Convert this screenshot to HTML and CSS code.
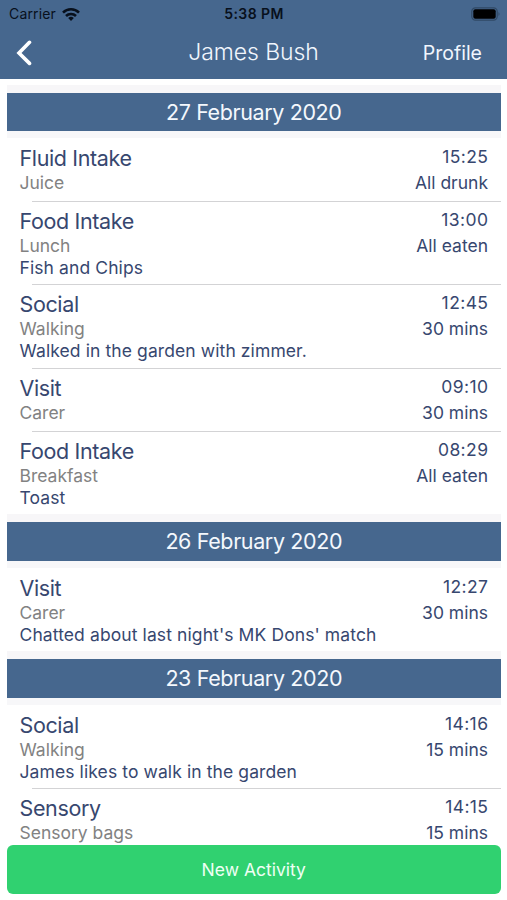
FILE: index.html
```html
<!DOCTYPE html>
<html lang="en">
<head>
<meta charset="utf-8">
<title>James Bush</title>
<link rel="stylesheet" href="styles.css">
</head>
<body>
<div class="app">
  <header class="header">
    <div class="status">
      <div class="carrier"><span>Carrier</span>
        <svg class="wifi" width="18" height="13" viewBox="0 0 18 13" fill="none" stroke="#08101c" stroke-width="2.6"><path d="M1 4.6A11.4 11.4 0 0 1 17 4.6"/><path d="M4 8A7.1 7.1 0 0 1 14 8"/><path d="M9 13L6.2 10.1A4 4 0 0 1 11.8 10.1Z" fill="#08101c" stroke="none"/></svg>
      </div>
      <span class="clock">5:38 PM</span>
      <svg class="battery" width="30" height="14" viewBox="0 0 30 14"><rect x=".8" y=".8" width="25.4" height="12.4" rx="3.6" fill="none" stroke="#304965" stroke-width="1.2"/><rect x="2.3" y="2.3" width="22.4" height="9.4" rx="2" fill="#000"/><path d="M27.5 5Q29.5 7 27.5 9Z" fill="#304965"/></svg>
    </div>
    <nav class="nav">
      <svg class="back" width="18" height="28" viewBox="0 0 18 28" fill="none" stroke="#fff" stroke-width="3.6" stroke-linecap="round" stroke-linejoin="miter"><path d="M15.5 3.3L5 14L15.5 24.4"/></svg>
      <h1 class="name">James Bush</h1>
      <span class="profile">Profile</span>
    </nav>
  </header>
  <main class="list">
    <section>
      <h2 class="date">27 February 2020</h2>
      <article class="row"><div><h3>Fluid Intake</h3><p class="kind">Juice</p></div><div class="side"><time>15:25</time><p>All drunk</p></div></article>
      <article class="row tall"><div><h3>Food Intake</h3><p class="kind">Lunch</p><p class="note">Fish and Chips</p></div><div class="side"><time>13:00</time><p>All eaten</p></div></article>
      <article class="row tall"><div><h3>Social</h3><p class="kind">Walking</p><p class="note">Walked in the garden with zimmer.</p></div><div class="side"><time>12:45</time><p>30 mins</p></div></article>
      <article class="row"><div><h3>Visit</h3><p class="kind">Carer</p></div><div class="side"><time>09:10</time><p>30 mins</p></div></article>
      <article class="row tall"><div><h3>Food Intake</h3><p class="kind">Breakfast</p><p class="note">Toast</p></div><div class="side"><time>08:29</time><p>All eaten</p></div></article>
    </section>
    <section>
      <h2 class="date">26 February 2020</h2>
      <article class="row tall"><div><h3>Visit</h3><p class="kind">Carer</p><p class="note">Chatted about last night's MK Dons' match</p></div><div class="side"><time>12:27</time><p>30 mins</p></div></article>
    </section>
    <section>
      <h2 class="date">23 February 2020</h2>
      <article class="row tall"><div><h3>Social</h3><p class="kind">Walking</p><p class="note">James likes to walk in the garden</p></div><div class="side"><time>14:16</time><p>15 mins</p></div></article>
      <article class="row"><div><h3>Sensory</h3><p class="kind">Sensory bags</p></div><div class="side"><time>14:15</time><p>15 mins</p></div></article>
    </section>
  </main>
  <footer class="footer"><button class="add">New Activity</button></footer>
</div>
</body>
</html>
```
FILE: styles.css
```css
* { box-sizing: border-box; margin: 0; padding: 0; }
body { background: #fff; font-family: Inter, "Liberation Sans", sans-serif; color: #37476f; }
h1, h2, h3 { font-weight: 400; }
svg { display: block; }
.app { height: 900px; display: flex; flex-direction: column; overflow: hidden; }
.header { height: 79px; flex: none; background: #46678e; }
.status { height: 28px; display: grid; grid-template-columns: 1fr auto 1fr; align-items: center; padding: 0 6px 2px 7px; color: #08101c; font-size: 14px; line-height: 28px; }
.carrier { display: flex; align-items: center; gap: 6px; padding-left: 2px; letter-spacing: .15px; }
.clock { font-weight: 600; letter-spacing: .4px; }
.battery { justify-self: end; }
.nav { height: 50px; display: grid; grid-template-columns: 1fr auto 1fr; align-items: center; padding: 0 25px; color: #f1f6fd; }
.back { margin-left: -11px; }
.name { font-size: 23px; font-weight: 300; line-height: 48px; letter-spacing: -.1px; margin-bottom: 2px; }
.profile { justify-self: end; font-size: 19.5px; line-height: 50px; }
.list { flex: 1; min-height: 0; overflow: hidden; padding: 5.5px 6.5px 0 7px; }
.date { height: 53.5px; border-top: 8px solid #f7f6f8; border-bottom: 7px solid #f7f7f9; background: #46678e; color: #f4f8fd; text-align: center; font-size: 21.5px; line-height: 38.5px; letter-spacing: -.38px; }
.row { height: 62.75px; display: flex; justify-content: space-between; padding: 8px 12.5px 0 12.5px; font-size: 17.5px; line-height: 24px; }
.row.tall { height: 83.5px; }
.row + .row { background: linear-gradient(#d3d3d5, #d3d3d5) 25px 0 / 100% 1px no-repeat; }
.row h3 { font-size: 21.5px; line-height: 25px; letter-spacing: -.37px; }
.kind { color: #828282; }
.note { line-height: 20px; letter-spacing: .1px; }
.side { text-align: right; margin-top: -2px; }
.side time { display: block; line-height: 25px; margin: 0 -.4px 2px 0; letter-spacing: .4px; }
.footer { height: 55px; flex: none; padding: 0 6.5px 6px 7px; }
.add { display: block; width: 100%; height: 49px; border: 0; border-radius: 6px; background: #30d170; color: #effff4; font: 400 17.5px/49px Inter, "Liberation Sans", sans-serif; }
```
